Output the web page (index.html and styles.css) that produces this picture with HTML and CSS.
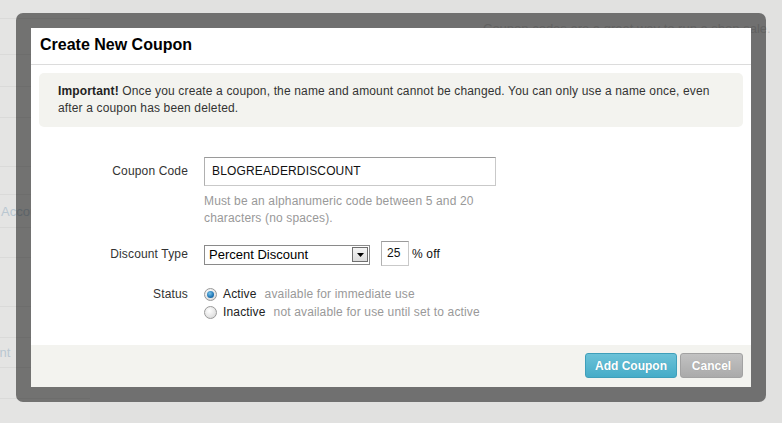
FILE: index.html
```html
<!DOCTYPE html>
<html>
<head>
<meta charset="utf-8">
<link rel="stylesheet" href="styles.css">
</head>
<body>
<div class="page">
  <aside class="sidebar">
    <div class="srow h19"></div>
    <div class="srow h36"></div>
    <div class="srow h32"></div>
    <div class="srow h31"></div>
    <div class="srow h49"></div>
    <div class="srow h28"></div>
    <div class="srow h33"><span class="slink">Accounts</span></div>
    <div class="srow h30"></div>
    <div class="srow h49"></div>
    <div class="srow h31"></div>
    <div class="srow h30"><span class="slink shift">Payment</span></div>
    <div class="srow h31"></div>
  </aside>
  <main class="main">
    <p class="intro">Coupon codes are a great way to run a shop sale.</p>
  </main>
</div>

<div class="modal-frame">
  <div class="dialog">
    <div class="dialog-head">Create New Coupon</div>
    <div class="dialog-body">
      <div class="notice"><b>Important!</b> Once you create a coupon, the name and amount cannot be changed. You can only use a name once, even after a coupon has been deleted.</div>
      <div class="form">
        <div class="label l-code">Coupon Code</div>
        <div class="field">
          <div class="text-input wide">BLOGREADERDISCOUNT</div>
          <div class="help">Must be an alphanumeric code between 5 and 20<br>characters (no spaces).</div>
        </div>

        <div class="label l-type">Discount Type</div>
        <div class="field inline">
          <div class="select">
            <span class="select-text">Percent Discount</span>
            <span class="select-btn"><svg width="7" height="4" viewBox="0 0 7 4"><path d="M0 0H7L3.5 4Z" fill="#000"/></svg></span>
          </div>
          <div class="text-input small">25</div>
          <span class="unit">% off</span>
        </div>

        <div class="label l-status">Status</div>
        <div class="field radios">
          <div class="radio-line"><span class="radio checked"></span><span class="opt">Active</span><span class="desc">available for immediate use</span></div>
          <div class="radio-line"><span class="radio"></span><span class="opt">Inactive</span><span class="desc">not available for use until set to active</span></div>
        </div>
      </div>
    </div>
    <div class="dialog-foot">
      <button class="btn btn-primary">Add Coupon</button>
      <button class="btn btn-cancel">Cancel</button>
    </div>
  </div>
</div>
</body>
</html>
```

FILE: styles.css
```css
* { box-sizing: border-box; }
html, body { margin: 0; padding: 0; }
body {
  width: 782px;
  height: 423px;
  overflow: hidden;
  background: #e1e1e0;
  font-family: "Liberation Sans", Arial, sans-serif;
  font-size: 12px;
  color: #333;
  position: relative;
}

.page { display: flex; height: 423px; }
.sidebar { width: 90px; background: #e4e4e3; overflow: hidden; }
.srow { border-bottom: 1px solid #dadad9; display: flex; align-items: center; white-space: nowrap; }
.h19 { height: 19px; }
.h28 { height: 28px; }
.h30 { height: 30px; }
.h31 { height: 31px; }
.h32 { height: 32px; }
.h33 { height: 33px; }
.h36 { height: 36px; }
.h49 { height: 49px; }
.slink { color: #b9c7d1; font-size: 13px; margin-left: 1px; }
.slink.shift { margin-left: -41px; }
.main { flex: 1; }
.intro { margin: 21px 0 0 393px; color: #c4c4c4; font-size: 13px; white-space: nowrap; }

.modal-frame {
  position: absolute;
  left: 16px;
  top: 13px;
  width: 750px;
  height: 389px;
  padding: 15px;
  background: rgba(0, 0, 0, 0.5);
  border-radius: 7px;
}
.dialog {
  background: #fff;
  height: 359px;
  display: flex;
  flex-direction: column;
}
.dialog-head {
  height: 37px;
  border-bottom: 1px solid #dcdcdc;
  padding: 8px 0 0 9px;
  font-size: 16px;
  font-weight: bold;
  color: #000;
}
.dialog-body { flex: 1; padding: 8px 8px 0; letter-spacing: 0.15px; }
.notice {
  background: #f3f3ef;
  border-radius: 5px;
  height: 54px;
  padding: 10px 30px 0 19px;
  line-height: 17px;
  color: #333;
}
.notice b { color: #222; }

.form {
  display: grid;
  grid-template-columns: 149px 1fr;
  column-gap: 16px;
  padding-top: 30px;
}
.label { text-align: right; color: #333; }
.l-code { line-height: 29px; }
.l-type { height: 25px; line-height: 27px; margin-top: 14px; }
.l-status { margin-top: 19px; line-height: 18px; }

.field { display: flex; flex-direction: column; align-items: flex-start; }
.field.inline { flex-direction: row; align-items: center; margin-top: 14px; height: 25px; }
.text-input {
  border: 1px solid #c9c9c9;
  border-top-color: #9a9a9a;
  border-left-color: #b0b0b0;
  color: #111;
  background: #fff;
}
.text-input.wide { width: 292px; height: 29px; line-height: 27px; padding-left: 7px; }
.text-input.small { width: 28px; height: 25px; line-height: 23px; padding-left: 5px; margin-left: 11px; font-size: 12px; }
.help { margin-top: 7px; color: #999; line-height: 17px; }

.select {
  width: 166px;
  height: 20px;
  margin-top: 2px;
  border: 1px solid #8a8a8a;
  display: flex;
  align-items: center;
  justify-content: space-between;
  padding: 0 1px 0 4px;
  background: #fff;
  letter-spacing: 0;
}
.select-text { font-size: 13px; color: #000; }
.select-btn {
  width: 16px;
  height: 15px;
  border: 1px solid #6f6f6f;
  background: linear-gradient(#f4f4f4, #dcdcdc);
  display: flex;
  align-items: center;
  justify-content: center;
}
.unit { margin-left: 3px; color: #111; }

.radios { margin-top: 19px; }
.radio-line { display: flex; align-items: center; height: 18px; }
.radio {
  width: 13px;
  height: 13px;
  border-radius: 50%;
  border: 1px solid #9a9a9a;
  background: radial-gradient(circle at 40% 35%, #fff, #e0e0e0 70%, #c8c8c8);
  display: inline-flex;
  align-items: center;
  justify-content: center;
}
.radio.checked::after {
  content: "";
  width: 7px;
  height: 7px;
  border-radius: 50%;
  background: radial-gradient(circle at 40% 35%, #7cc4ea, #1d74b4 60%, #0c4f86);
}
.opt { margin-left: 6px; color: #222; }
.desc { margin-left: 8px; color: #999; }

.dialog-foot {
  height: 42px;
  background: #f3f3ef;
  display: flex;
  justify-content: flex-end;
  align-items: flex-start;
  gap: 3px;
  padding: 8px 8px 0 0;
}
.btn {
  height: 25px;
  border-radius: 3px;
  font-family: "Liberation Sans", Arial, sans-serif;
  font-size: 12px;
  font-weight: bold;
  color: #fff;
  padding: 0;
  text-shadow: 0 0 1px rgba(0,0,0,0.15);
  cursor: pointer;
}
.btn-primary {
  width: 92px;
  border: 1px solid #3f9fba;
  background: linear-gradient(#6cc2d8, #46acc8);
}
.btn-cancel {
  width: 63px;
  border: 1px solid #a2a2a2;
  background: linear-gradient(#c2c2c2, #aaaaaa);
}
```
